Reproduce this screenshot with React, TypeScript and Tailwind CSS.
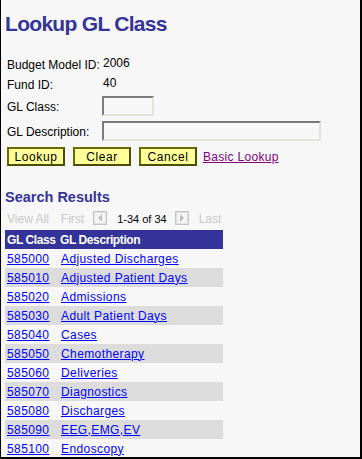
import React from "react";

const rows: [string, string][] = [
  ["585000", "Adjusted Discharges"],
  ["585010", "Adjusted Patient Days"],
  ["585020", "Admissions"],
  ["585030", "Adult Patient Days"],
  ["585040", "Cases"],
  ["585050", "Chemotherapy"],
  ["585060", "Deliveries"],
  ["585070", "Diagnostics"],
  ["585080", "Discharges"],
  ["585090", "EEG,EMG,EV"],
  ["585100", "Endoscopy"],
];

function NavIcon({ dir }: { dir: "left" | "right" }) {
  return (
    <svg width="14" height="14" viewBox="0 0 14 14" className="block">
      <rect x="0.5" y="0.5" width="13" height="13" fill="#f4f4f4" stroke="#c4c4c4" />
      <rect x="1.5" y="1.5" width="11" height="11" fill="none" stroke="#e0e0e0" />
      {dir === "left" ? (
        <polygon points="9,3 9,11 5,7" fill="#bdbdbd" />
      ) : (
        <polygon points="5,3 5,11 9,7" fill="#bdbdbd" />
      )}
    </svg>
  );
}

function Btn({ label }: { label: string }) {
  return (
    <button className="w-[58px] h-[19px] bg-[#ffff99] border-2 border-t-[#6b6b00] border-l-[#6b6b00] border-r-[#4d4d00] border-b-[#4d4d00] text-[12px] leading-[14px] text-black tracking-[0.6px] flex items-center justify-center p-0">
      {label}
    </button>
  );
}

export default function App() {
  return (
    <div
      className="w-[362px] h-[459px] overflow-hidden bg-[#f7f7f7] border-l border-r-2 border-b-2 border-black box-border pl-[4px]"
      style={{ fontFamily: '"Liberation Sans", Arial, sans-serif' }}
    >
      <h1 className="pt-[11px] text-[21px] leading-[25px] font-bold text-[#333399] tracking-[-0.7px]">
        Lookup GL Class
      </h1>

      <div className="mt-[20px] ml-[2px] text-[12px] leading-[14px] text-black">
        <div className="flex h-[20px]">
          <div className="w-[96px] pt-[2px]">Budget Model ID:</div>
          <div>2006</div>
        </div>
        <div className="flex h-[20px]">
          <div className="w-[96px] pt-[2px]">Fund ID:</div>
          <div>40</div>
        </div>
        <div className="flex h-[25px]">
          <div className="w-[95px] pt-[4px]">GL Class:</div>
          <div className="w-[52px] h-[20px] border-2 border-t-[#7a7a7a] border-l-[#7a7a7a] border-r-[#e4e4d6] border-b-[#e4e4d6] bg-[#f7f7f7]" />
        </div>
        <div className="flex h-[26px]">
          <div className="w-[95px] pt-[4px]">GL Description:</div>
          <div className="w-[219px] h-[20px] border-2 border-t-[#7a7a7a] border-l-[#7a7a7a] border-r-[#e4e4d6] border-b-[#e4e4d6] bg-[#f7f7f7]" />
        </div>
        <div className="flex items-center gap-[8px]">
          <Btn label="Lookup" />
          <Btn label="Clear" />
          <Btn label="Cancel" />
          <a className="ml-[-2px] text-[#800080] underline tracking-[0.3px]" href="#">
            Basic Lookup
          </a>
        </div>
      </div>

      <h2 className="mt-[23px] text-[14.5px] leading-[17px] font-bold text-[#333399]">
        Search Results
      </h2>

      <div className="mt-[6px] h-[18px] flex items-start text-[12px] leading-[14px] text-[#c8c8c8]">
        <span className="ml-[2px] pt-0">View All</span>
        <span className="ml-[12px]">First</span>
        <span className="ml-[9px] -mt-[1px]">
          <NavIcon dir="left" />
        </span>
        <span className="ml-[10px] text-[11px] text-black">1-34 of 34</span>
        <span className="ml-[8px] -mt-[1px]">
          <NavIcon dir="right" />
        </span>
        <span className="ml-[10px]">Last</span>
      </div>

      <div className="w-[218px] text-[12px] leading-[14px]">
        <div className="flex items-center h-[19px] bg-[#333399] text-white font-bold tracking-[-0.4px]">
          <div className="w-[55px] pl-[2px]">GL Class</div>
          <div>GL Description</div>
        </div>
        {rows.map(([code, desc], i) => (
          <div
            key={code}
            className={
              "flex items-center h-[19px] " + (i % 2 === 1 ? "bg-[#dcdcdc]" : "")
            }
          >
            <div className="w-[56px] pl-[2px]">
              <a href="#" className="text-[#0000ff] underline tracking-[0.4px]">
                {code}
              </a>
            </div>
            <div>
              <a href="#" className="text-[#0000ff] underline tracking-[0.4px]">
                {desc}
              </a>
            </div>
          </div>
        ))}
      </div>
    </div>
  );
}
